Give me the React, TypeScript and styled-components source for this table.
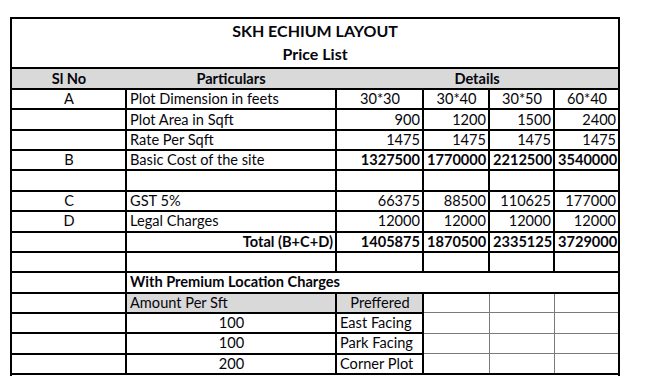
import React from 'react';
import styled, { createGlobalStyle, css } from 'styled-components';

const GlobalStyle = createGlobalStyle`
  html, body {
    margin: 0;
    background: #ffffff;
  }
  body {
    font-family: Lato, 'Open Sans', sans-serif;
    color: #06060c;
  }
`;

const Page = styled.div`
  padding: 17px 0 0 10px;
`;

const Sheet = styled.table`
  border-collapse: collapse;
  table-layout: fixed;
  width: 608px;
  font-size: 14.6px;
  border: 2px solid #000;
`;

// rows that sit on a hairline (the first two detail rows are ruled thinner)
const Row = styled.tr<{ $h?: number; $hair?: boolean }>`
  height: ${p => p.$h ?? 20.36}px;
  ${p =>
    p.$hair &&
    css`
      & > td {
        border-bottom-width: 1px;
      }
    `}
`;

type Align = 'left' | 'center' | 'right';

const Cell = styled.td<{
  $align?: Align;
  $bold?: boolean;
  $shade?: boolean;
  $thin?: boolean;
  $open?: 'left' | 'right';
}>`
  padding: 0 2px 0 3px;
  line-height: 18px;
  white-space: nowrap;
  overflow: hidden;
  text-align: ${p => p.$align ?? 'left'};
  font-weight: ${p => (p.$bold ? 700 : 400)};
  background: ${p => (p.$shade ? '#d9d9d9' : 'transparent')};
  border: 2px solid #000;
  ${p =>
    p.$thin &&
    css`
      border: 1px solid #7a7a7a;
    `}
  ${p => p.$open === 'right' && css`border-right: none;`}
  ${p => p.$open === 'left' && css`border-left: none;`}
`;

const TitleCell = styled.td`
  height: 48px;
  padding: 0;
  text-align: center;
  vertical-align: top;
  font-weight: 700;
  font-size: 16px;
  line-height: 23px;
  border-bottom: 2px solid #000;
`;

const HeadCell = styled.th`
  padding: 0;
  text-align: center;
  font-weight: 700;
  line-height: 18px;
  background: #d9d9d9;
  border-bottom: 2px solid #000;
`;

type Line = {
  sl?: string;
  label?: string;
  vals?: string[];
  center?: boolean;
  boldVals?: boolean;
  total?: boolean;
  hair?: boolean;
};

const lines: Line[] = [
  { sl: 'A', label: 'Plot Dimension in feets', vals: ['30*30', '30*40', '30*50', '60*40'], center: true, hair: true },
  { label: 'Plot Area in Sqft', vals: ['900', '1200', '1500', '2400'], hair: true },
  { label: 'Rate Per Sqft', vals: ['1475', '1475', '1475', '1475'] },
  { sl: 'B', label: 'Basic Cost of the site', vals: ['1327500', '1770000', '2212500', '3540000'], boldVals: true },
  {},
  { sl: 'C', label: 'GST 5%', vals: ['66375', '88500', '110625', '177000'] },
  { sl: 'D', label: 'Legal Charges', vals: ['12000', '12000', '12000', '12000'] },
  { label: 'Total (B+C+D)', vals: ['1405875', '1870500', '2335125', '3729000'], boldVals: true, total: true },
  {},
];

const premium = [
  { amount: '100', place: 'East Facing' },
  { amount: '100', place: 'Park Facing' },
  { amount: '200', place: 'Corner Plot' },
];

const App: React.FC = () => {
  return (
    <Page>
      <GlobalStyle />
      <Sheet>
        <colgroup>
          <col style={{ width: 115 }} />
          <col style={{ width: 210 }} />
          <col style={{ width: 87 }} />
          <col style={{ width: 66 }} />
          <col style={{ width: 65 }} />
          <col style={{ width: 65 }} />
        </colgroup>
        <tbody>
          <tr>
            <TitleCell colSpan={6}>
              SKH ECHIUM LAYOUT
              <br />
              Price List
            </TitleCell>
          </tr>
          <Row $h={21}>
            <HeadCell>Sl No</HeadCell>
            <HeadCell>Particulars</HeadCell>
            <HeadCell colSpan={4}>Details</HeadCell>
          </Row>
          {lines.map((l, i) => (
            <Row key={i} $hair={l.hair}>
              <Cell $align="center">{l.sl}</Cell>
              <Cell $align={l.total ? 'right' : 'left'} $bold={l.total}>
                {l.label}
              </Cell>
              {(l.vals ?? ['', '', '', '']).map((v, j) => (
                <Cell key={j} $align={l.center ? 'center' : 'right'} $bold={l.boldVals}>
                  {v}
                </Cell>
              ))}
            </Row>
          ))}
          <Row>
            <Cell />
            <Cell colSpan={2} $bold $open="right">
              With Premium Location Charges
            </Cell>
            <Cell colSpan={3} $open="left" />
          </Row>
          <Row>
            <Cell />
            <Cell $shade>Amount Per Sft</Cell>
            <Cell $shade $align="center">
              Preffered
            </Cell>
            <Cell $thin />
            <Cell $thin />
            <Cell $thin />
          </Row>
          {premium.map((p, i) => (
            <Row key={i}>
              <Cell />
              <Cell $align="center">{p.amount}</Cell>
              <Cell>{p.place}</Cell>
              <Cell $thin />
              <Cell $thin />
              <Cell $thin />
            </Row>
          ))}
          <Row>
            <Cell colSpan={6} />
          </Row>
        </tbody>
      </Sheet>
    </Page>
  );
};

export default App;
